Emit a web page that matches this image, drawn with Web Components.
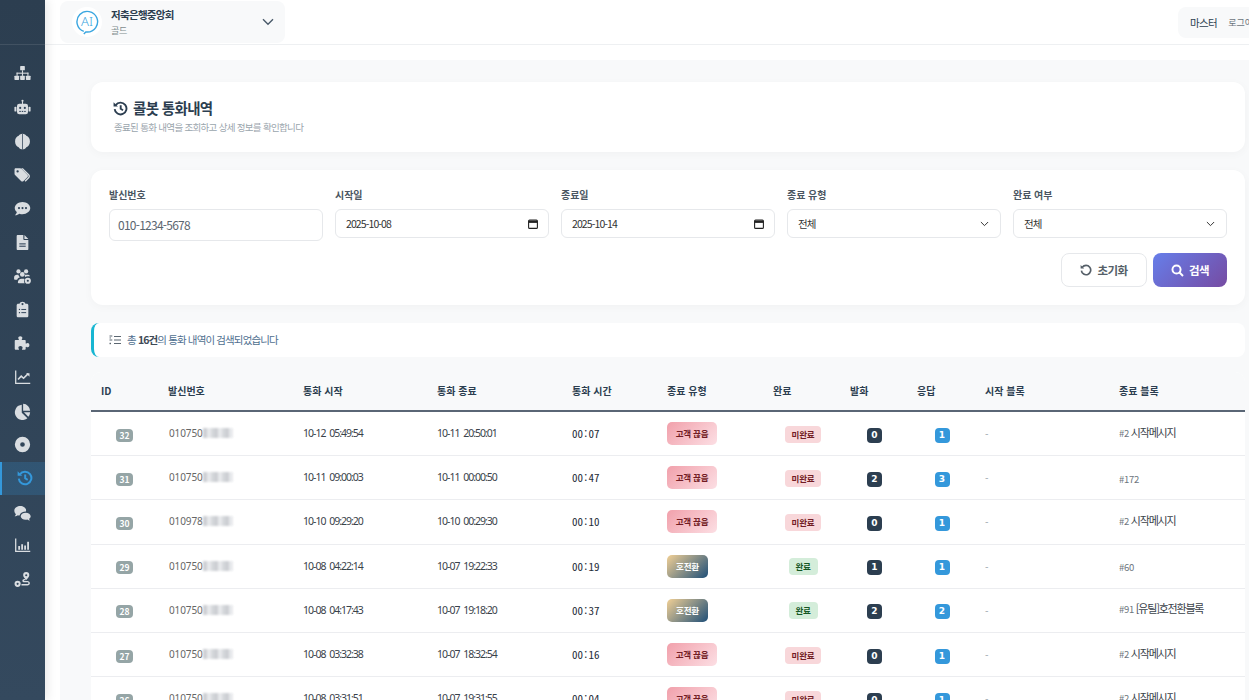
<!DOCTYPE html>
<html lang="ko">
<head>
<meta charset="utf-8">
<title>콜봇 통화내역</title>
<style>
html,body{margin:0;height:700px;overflow:hidden;background:#fff;}
body{font-family:"Noto Sans CJK KR","Noto Sans",sans-serif;color:#2c3e50;}
</style>
</head>
<body>
<app-shell>
  <side-nav slot="nav"></side-nav>
  <top-bar slot="top"></top-bar>
  <page-title></page-title>
  <filter-panel></filter-panel>
  <result-note></result-note>
  <call-table></call-table>
</app-shell>
<script>
const HISTORY = (c, w) => `<svg width="${w}" height="${w}" viewBox="0 0 16 16" fill="none" stroke="${c}" stroke-width="2"><path d="M2.900 4.400A6.300 6.300 0 1 1 1.800 8.600"/><path d="M8.200 4.600v3.700l2.500 1.500"/><path d="M.6 1.200v4.600h4.600z" fill="${c}" stroke="none"/></svg>`;

class AppShell extends HTMLElement {
    constructor() {
        super();
        this.attachShadow({ mode: "open" }).innerHTML = `
        <style>
        :host{display:grid;grid-template-columns:45px 1fr;height:700px;overflow:hidden;}
        .right{min-width:0;display:flex;flex-direction:column;height:700px;overflow:hidden;}
        .gutter{flex:1;padding:15px 0 0 15px;}
        main{background:#f8f9fa;padding:22px 4px 0 31px;height:100%;display:flex;flex-direction:column;}
        </style>
        <slot name="nav"></slot>
        <div class="right">
          <slot name="top"></slot>
          <div class="gutter"><main><slot></slot></main></div>
        </div>`;
    }
}

class SideNav extends HTMLElement {
    constructor() {
        super();
        const c = "#d9dde1", d = "#2f4257";
        const icons = [
            `<rect x="5.800" y="1" width="4.400" height="4" rx=".6"/><rect x="7.500" y="5" width="1" height="2.400"/><rect x="2.400" y="7.200" width="11.200" height="1"/><rect x="2.400" y="7.200" width="1" height="3"/><rect x="12.600" y="7.200" width="1" height="3"/><rect x="7.500" y="7.200" width="1" height="3"/><rect x=".4" y="10" width="4.400" height="4" rx=".6"/><rect x="5.800" y="10" width="4.400" height="4" rx=".6"/><rect x="11.200" y="10" width="4.400" height="4" rx=".6"/>`,
            `<circle cx="8" cy="1.700" r="1"/><rect x="7.500" y="2" width="1" height="3"/><rect x="2.800" y="4.400" width="10.400" height="10" rx="2.200"/><rect x=".4" y="7.200" width="1.900" height="4.600" rx=".8"/><rect x="13.700" y="7.200" width="1.900" height="4.600" rx=".8"/><circle cx="5.800" cy="8.400" r="1" fill="${d}"/><circle cx="10.200" cy="8.400" r="1" fill="${d}"/><rect x="5" y="11.200" width="1.400" height="1" fill="${d}"/><rect x="7.300" y="11.200" width="1.400" height="1" fill="${d}"/><rect x="9.600" y="11.200" width="1.400" height="1" fill="${d}"/>`,
            `<path d="M8 .7c2 0 3.100 1 3.600 2C13.500 3.200 15 5.200 15 8s-1.500 4.800-3.400 5.300c-.5 1-1.600 2-3.600 2s-3.100-1-3.600-2C2.500 12.800 1 10.800 1 8s1.500-4.800 3.400-5.300c.5-1 1.600-2 3.600-2z"/><rect x="7.650" y=".7" width=".7" height="14.600" fill="${d}"/>`,
            `<path fill-rule="evenodd" d="M.5 2.200v4.200c0 .5.2.9.5 1.200l5.600 5.600c.7.7 1.700.7 2.400 0l3.600-3.600c.7-.7.7-1.700 0-2.400L7 1.600C6.700 1.300 6.300 1.100 5.800 1.100H1.600C1 1.100.5 1.600.5 2.200zM3.400 3a1.100 1.100 0 1 1 0 2.200 1.100 1.100 0 0 1 0-2.200z"/><path d="M8.400 1.100l5.800 5.800c1.100 1.100 1.100 2.500 0 3.600l-3.300 3.300-.9-.9 3.300-3.300c.6-.6.6-1.300 0-1.900L6.700 1.100z"/>`,
            `<path d="M8 1.800c4 0 7.300 2.600 7.300 5.800S12 13.400 8 13.400c-1 0-2-.2-2.900-.5-1 .8-2.400 1.500-4.200 1.500.9-.9 1.600-2 1.800-3C1.500 10.400.7 9 .7 7.600.7 4.400 4 1.800 8 1.800z"/><circle cx="4.700" cy="7.600" r="1" fill="${d}"/><circle cx="8" cy="7.600" r="1" fill="${d}"/><circle cx="11.300" cy="7.600" r="1" fill="${d}"/>`,
            `<path d="M2.500 2c0-.6.4-1 1-1h5.300v3.800c0 .5.4.9.9.9h3.800V14c0 .6-.4 1-1 1h-9c-.6 0-1-.4-1-1zM9.800 1l3.700 3.700H9.800z"/><rect x="5" y="8.800" width="6" height="1" fill="${d}"/><rect x="5" y="11" width="6" height="1" fill="${d}"/>`,
            `<circle cx="4.200" cy="3.200" r="2"/><circle cx="11.400" cy="3.200" r="2"/><circle cx="7.800" cy="6" r="2.200"/><path d="M.1 9c0-1.600 1.200-2.600 2.700-2.600h1.300c.3 1.100.9 1.800 1.500 2.200C4.100 9.100 3.200 10 3 11H.9C.4 11 .1 10.700.1 10.300z"/><path d="M3.600 13.600c0-2.200 1.600-3.600 3.400-3.600h1.600c.5 0 1 .1 1.400.3-.8 1-.8 3 .1 4.100H4.400c-.5 0-.8-.3-.8-.8z"/><path d="M10 6.400h2.700c1 0 1.900.5 2.400 1.300h-2.500c-.8 0-1.600.3-2.200.8-.2-.7-.3-1.400-.4-2.100z"/><circle cx="13" cy="12" r="2.900"/><circle cx="13" cy="12" r="1" fill="${d}"/>`,
            `<path fill-rule="evenodd" d="M4 2.500h1.200C5.500 1.400 6.600.6 8 .6s2.500.8 2.800 1.900H12c.9 0 1.500.6 1.500 1.500v9.900c0 .9-.6 1.500-1.500 1.500H4c-.9 0-1.500-.6-1.500-1.500V4c0-.9.6-1.500 1.500-1.500zM7 2.900a1 1 0 1 0 2 0 1 1 0 0 0-2 0z"/><rect x="4.600" y="7.400" width="1.100" height="1.100" fill="${d}"/><rect x="6.900" y="7.500" width="4.500" height=".9" fill="${d}"/><rect x="4.600" y="10.400" width="1.100" height="1.100" fill="${d}"/><rect x="6.900" y="10.500" width="4.500" height=".9" fill="${d}"/>`,
            `<path d="M5.800 1.200c1.300 0 2.100.7 2.100 1.600 0 .6-.4 1-.6 1.400-.1.3.1.5.4.5h2.400c.5 0 .9.4.9.9v2.100c0 .3.2.5.5.4.4-.2.8-.6 1.400-.6.9 0 1.600.8 1.600 2 0 1.300-.7 2.100-1.600 2.100-.6 0-1-.4-1.400-.6-.3-.1-.5.1-.5.4v1.500c0 .5-.4.9-.9.9H7.900c-.3 0-.5-.2-.4-.5.2-.4.6-.8.6-1.400 0-.9-.8-1.600-2-1.600s-2 .7-2 1.600c0 .6.4 1 .6 1.400.1.3-.1.5-.4.5H1.600c-.5 0-.9-.4-.9-.9V5.600c0-.5.4-.9.9-.9h2.600c.3 0 .5-.2.4-.5-.2-.4-.6-.8-.6-1.400 0-.9.8-1.600 1.800-1.600z"/>`,
            `<path d="M1 1.500h1.200V13H15.300v1.200H1z"/><path d="M3.800 9.900l3-3.200 2.200 2 4.400-4.400" fill="none" stroke="${c}" stroke-width="1.500"/><path d="M11.400 4h3.200v3.200z"/>`,
            `<path d="M7.300 1.600v7.500l5.300 5.200A7.200 7.200 0 1 1 7.300 1.600z"/><path d="M8.600.8a7 7 0 0 1 6.600 6.600H8.600z"/><path d="M9.300 8.700h5.900a7 7 0 0 1-1.700 4.200z"/>`,
            `<path fill-rule="evenodd" d="M8 .8a7.200 7.200 0 1 1 0 14.400A7.200 7.200 0 0 1 8 .8zm0 5a2.200 2.200 0 1 0 0 4.400 2.200 2.200 0 0 0 0-4.400z"/>`,
            ``,
            `<path d="M5.900 1.800c3 0 5.500 1.800 5.500 4.200 0 .4-.1.800-.2 1.100-2.800 0-5.400 1.500-6 3.800-.6 0-1.200-.1-1.700-.3-.7.500-1.700 1-2.900 1 .6-.7 1.100-1.400 1.200-2.200C.8 8.600.3 7.400.3 6 .4 3.600 2.900 1.800 5.900 1.800z"/><path d="M11 8.200c2.600 0 4.700 1.500 4.700 3.300 0 1-.6 1.900-1.500 2.500.1.500.5 1 1 1.500-1.100 0-2-.3-2.700-.9-.5.100-1 .2-1.500.2-2.600 0-4.700-1.500-4.700-3.300s2.100-3.300 4.700-3.300z"/>`,
            `<path d="M1 1.500h1.200V13H15.300v1.200H1z"/><rect x="4" y="8.500" width="1.700" height="3.500"/><rect x="6.800" y="6.800" width="1.700" height="5.200"/><rect x="9.600" y="8" width="1.700" height="4"/><rect x="12.400" y="4.500" width="1.700" height="7.500"/>`,
            `<path fill-rule="evenodd" d="M11.500 1a2.900 2.900 0 0 1 2.900 2.900c0 1.400-1.800 3.500-2.900 4.500-1.100-1-2.900-3.100-2.900-4.500A2.900 2.900 0 0 1 11.500 1zm0 2a1 1 0 1 0 0 2 1 1 0 0 0 0-2z"/><path fill-rule="evenodd" d="M3.400 9.200a2.900 2.900 0 1 1 0 5.800 2.900 2.900 0 0 1 0-5.800zm0 1.900a1 1 0 1 0 0 2 1 1 0 0 0 0-2z"/><path d="M7 12.300h5.600c.7 0 1-.3 1-.8s-.3-.8-1-.8H9.900c-1.300 0-2-.7-2-1.600s.7-1.600 2-1.600h.9v1.300h-.9c-.4 0-.6.1-.6.3s.2.300.6.3h2.700c1.400 0 2.300.9 2.300 2.100s-.9 2.100-2.300 2.100H7z"/>`
        ];
        const items = icons.map((p, i) => i === 12
            ? `<a class="on">${HISTORY("#3498db", 16)}</a>`
            : `<a><svg width="17" height="17" viewBox="0 0 16 16" fill="${c}">${p}</svg></a>`).join("");
        this.attachShadow({ mode: "open" }).innerHTML = `
        <style>
        :host{display:block;height:700px;background:linear-gradient(180deg,#2c3e50,#34495e);box-shadow:2px 0 10px rgba(0,0,0,.1);position:relative;z-index:2;}
        .brand{height:44px;border-bottom:1px solid rgba(255,255,255,.1);}
        nav{padding-top:12px;display:flex;flex-direction:column;}
        a{height:33.730px;display:flex;align-items:center;justify-content:center;border-left:2px solid transparent;box-sizing:border-box;padding-right:2px;}
        a.on{background:rgba(52,152,219,.2);border-left-color:#3498db;}
        a.on svg{margin-left:5px;}
        </style>
        <div class="brand"></div>
        <nav>${items}</nav>`;
    }
}

class TopBar extends HTMLElement {
    constructor() {
        super();
        this.attachShadow({ mode: "open" }).innerHTML = `
        <style>
        :host{display:flex;height:44px;box-sizing:content-box;border-bottom:1px solid #eef0f2;padding-left:15px;background:#fff;overflow:hidden;flex:none;}
        .org{width:225px;height:42px;margin-top:1px;background:#f8f9fa;border-radius:8px;display:flex;align-items:center;padding-left:12px;box-sizing:border-box;flex:none;}
        .logo{width:30px;height:30px;border-radius:50%;background:#fff;display:flex;align-items:center;justify-content:center;flex:none;}
        .names{margin-left:9px;flex:1;display:flex;flex-direction:column;}
        .name{font-size:10.500px;font-weight:700;line-height:15px;letter-spacing:-.7px;color:#2c3e50;}
        .grade{font-size:9px;line-height:14px;margin-top:2px;color:#7f8c8d;letter-spacing:-.3px;}
        .chev{margin-right:11px;}
        .user{margin:7px 0 0 893px;height:31px;width:120px;flex:none;background:#f8f9fa;border-radius:8px;display:flex;align-items:center;padding-left:12px;box-sizing:border-box;gap:11px;}
        .role{font-size:10.500px;letter-spacing:-.6px;color:#2c3e50;}
        .out{font-size:9px;color:#6c757d;white-space:nowrap;}
        </style>
        <div class="org">
          <div class="logo">
            <svg width="24" height="26" viewBox="0 0 24 26" fill="none">
              <path d="M8.800 22.400A10.300 10.300 0 1 1 12 23h-1.200l-2 2" stroke="#3aa6e0" stroke-width="1.400"/>
              <text x="12" y="17" text-anchor="middle" font-family="Noto Sans,sans-serif" font-size="13" font-weight="300" fill="#3aa6e0">AI</text>
            </svg>
          </div>
          <div class="names"><span class="name">저축은행중앙회</span><span class="grade">골드</span></div>
          <svg class="chev" width="12" height="8" viewBox="0 0 12 8" fill="none" stroke="#4a5a6a" stroke-width="1.400"><path d="M1 1.300l5 5 5-5"/></svg>
        </div>
        <div class="user"><span class="role">마스터</span><span class="out">로그아웃</span></div>`;
    }
}

class PageTitle extends HTMLElement {
    constructor() {
        super();
        this.attachShadow({ mode: "open" }).innerHTML = `
        <style>
        :host{display:block;height:70px;box-sizing:border-box;background:#fff;border-radius:12px;box-shadow:0 2px 10px rgba(0,0,0,.03);padding:16px 22px 0;flex:none;}
        h1{margin:0;font-size:14.500px;line-height:20px;font-weight:700;color:#2c3e50;display:flex;align-items:center;gap:5px;letter-spacing:-.65px;}
        p{margin:2px 0 0 1px;font-size:9.500px;line-height:14px;color:#9aa5ad;letter-spacing:-.68px;}
        </style>
        <h1>${HISTORY("#2c3e50", 15)}콜봇 통화내역</h1>
        <p>종료된 통화 내역을 조회하고 상세 정보를 확인합니다</p>`;
    }
}

class FilterField extends HTMLElement {
    constructor() {
        super();
        const kind = this.getAttribute("kind");
        const trail = kind === "date"
            ? `<svg width="12" height="12" viewBox="0 0 12 12" fill="none" stroke="#222" stroke-width="1.100"><rect x="1.600" y="2.100" width="8.800" height="8.300" rx="1"/><path d="M1.600 3.900h8.800" stroke-width="2"/></svg>`
            : kind === "select"
            ? `<svg width="9" height="6" viewBox="0 0 10 6" fill="none" stroke="#333" stroke-width="1.100"><path d="M1 .8l4 4 4-4"/></svg>`
            : ``;
        this.attachShadow({ mode: "open" }).innerHTML = `
        <style>
        :host{display:block;min-width:0;}
        label{display:block;font-size:10px;line-height:14px;font-weight:700;color:#4a5662;margin:0 0 7px;letter-spacing:-.05px;}
        .box{height:29px;box-sizing:border-box;border:1px solid #e6e8eb;border-radius:6px;display:flex;align-items:center;justify-content:space-between;background:#fff;padding:0 10px;font-size:10.500px;color:#333;letter-spacing:-.9px;}
        :host([kind="text"]) .box{height:32px;padding:0 8px 2px;font-size:12px;color:#5b6670;letter-spacing:-.75px;}
        :host([kind="select"]) .box{padding:0 11px 0 10px;}
        :host([kind="date"]) .box{padding:0 9px 0 10px;}
        </style>
        <label>${this.getAttribute("label")}</label>
        <div class="box"><span><slot></slot></span>${trail}</div>`;
    }
}

class FilterPanel extends HTMLElement {
    constructor() {
        super();
        this.attachShadow({ mode: "open" }).innerHTML = `
        <style>
        :host{display:block;margin-top:18px;height:135px;box-sizing:border-box;background:#fff;border-radius:12px;box-shadow:0 2px 10px rgba(0,0,0,.03);padding:18px;flex:none;}
        .fields{display:grid;grid-template-columns:repeat(5,214px);gap:12px;height:65px;}
        .actions{display:flex;justify-content:flex-end;gap:6px;}
        button{height:34px;box-sizing:border-box;border-radius:8px;font:700 11.500px "Noto Sans CJK KR",sans-serif;display:flex;align-items:center;justify-content:center;gap:5px;padding:0;letter-spacing:-.5px;}
        .reset{width:86px;background:#fff;border:1px solid #e6e8eb;color:#555f68;}
        .go{width:74px;border:0;color:#fff;background:linear-gradient(135deg,#667eea,#764ba2);}
        </style>
        <div class="fields">
          <filter-field kind="text" label="발신번호">010-1234-5678</filter-field>
          <filter-field kind="date" label="시작일">2025-10-08</filter-field>
          <filter-field kind="date" label="종료일">2025-10-14</filter-field>
          <filter-field kind="select" label="종료 유형">전체</filter-field>
          <filter-field kind="select" label="완료 여부">전체</filter-field>
        </div>
        <div class="actions">
          <button class="reset"><svg width="12" height="12" viewBox="0 0 16 16" fill="none" stroke="#555f68" stroke-width="2.200"><path d="M3.100 4.400A6.200 6.200 0 1 1 1.900 8.800"/><path d="M.8 1.200v4.700h4.700z" fill="#555f68" stroke="none"/></svg>초기화</button>
          <button class="go"><svg width="13" height="13" viewBox="0 0 16 16" fill="none" stroke="#fff" stroke-width="2.400"><circle cx="6.800" cy="6.800" r="5"/><path d="M10.500 10.500l4.300 4.300"/></svg>검색</button>
        </div>`;
    }
}

class ResultNote extends HTMLElement {
    constructor() {
        super();
        this.attachShadow({ mode: "open" }).innerHTML = `
        <style>
        :host{display:flex;align-items:center;gap:6px;margin-top:18px;height:34px;box-sizing:border-box;background:#fff;border-radius:8px;border-left:3px solid #17b6d2;padding-left:15px;font-size:10.500px;color:#4f6f8f;letter-spacing:-.87px;flex:none;}
        b{font-weight:700;color:#3e4a56;}
        span{position:relative;top:-1px;}
        </style>
        <svg width="12" height="10" viewBox="0 0 12 10" fill="#5b6670"><rect x="5" y="1" width="7" height="1"/><rect x="5" y="4.500" width="7" height="1"/><rect x="5" y="8" width="7" height="1"/><rect x=".5" y=".5" width="2.800" height="1"/><rect x=".5" y="2.500" width="1.500" height=".9"/><rect x=".5" y="4.500" width="2.800" height="1"/><rect x=".5" y="7.800" width="1.500" height="1.400"/></svg>
        <span>총 <b>16건</b>의 통화 내역이 검색되었습니다</span>`;
    }
}

const CALLS = [
    [32, "010750", "10-12 05:49:54", "10-11 20:50:01", "00:07", "h", 0, 1, "#2", "시작메시지"],
    [31, "010750", "10-11 09:00:03", "10-11 00:00:50", "00:47", "h", 2, 3, "#172", ""],
    [30, "010978", "10-10 09:29:20", "10-10 00:29:30", "00:10", "h", 0, 1, "#2", "시작메시지"],
    [29, "010750", "10-08 04:22:14", "10-07 19:22:33", "00:19", "t", 1, 1, "#60", ""],
    [28, "010750", "10-08 04:17:43", "10-07 19:18:20", "00:37", "t", 2, 2, "#91", "[유틸]호전환블록"],
    [27, "010750", "10-08 03:32:38", "10-07 18:32:54", "00:16", "h", 0, 1, "#2", "시작메시지"],
    [26, "010750", "10-08 03:31:51", "10-07 19:31:55", "00:04", "h", 0, 1, "#2", "시작메시지"]
];

class CallTable extends HTMLElement {
    constructor() {
        super();
        this.attachShadow({ mode: "open" });
    }
    connectedCallback() {
        const heads = ["ID", "발신번호", "통화 시작", "통화 종료", "통화 시간", "종료 유형", "완료", "발화", "응답", "시작 블록", "종료 블록"];
        const rows = CALLS.map(r => `
          <div class="row">
            <span class="c"><i class="id">${r[0]}</i></span>
            <span class="phone">${r[1]}<i class="blur"></i></span>
            <span class="t">${r[2]}</span>
            <span class="t">${r[3]}</span>
            <span class="dur">${r[4]}</span>
            <span>${r[5] === "h" ? `<i class="end hang">고객 끊음</i>` : `<i class="end trans">호전환</i>`}</span>
            <span class="c">${r[5] === "h" ? `<i class="st no">미완료</i>` : `<i class="st yes">완료</i>`}</span>
            <span class="c"><i class="n dark">${r[6]}</i></span>
            <span class="c"><i class="n blue">${r[7]}</i></span>
            <span class="dash">-</span>
            <span class="blk${r[9] ? " named" : ""}"><small>${r[8]}</small> ${r[9]}</span>
          </div>`).join("");
        this.shadowRoot.innerHTML = `
        <style>
        :host{display:block;margin-top:15px;background:#fff;border-radius:10px 10px 0 0;flex:none;overflow:hidden;}
        .row,.head{display:grid;grid-template-columns:67px 135px 134px 135px 95px 106px 77px 67px 68px 134px 1fr;align-items:center;}
        .head{height:40px;box-sizing:border-box;background:#f8f9fa;border-bottom:2px solid #5a6675;font-size:10px;font-weight:700;color:#2c3e50;padding-bottom:2px;}
        .head span{padding-left:10px;}
        .row{height:44.200px;box-sizing:border-box;border-bottom:1px solid #ecedf0;font-size:11px;color:#333;}
        .row>span{padding-left:10px;min-width:0;white-space:nowrap;}
        .row>span.c{padding:0;text-align:center;}
        i{font-style:normal;display:inline-block;}
        .id{background:#95a5a6;color:#fff;font-size:8.500px;font-weight:700;line-height:13px;width:17px;border-radius:4px;}
        .row>.phone{font-family:"Noto Sans",sans-serif;font-size:10px;color:#666;display:flex;align-items:center;padding-left:11px;margin-bottom:1px;letter-spacing:-.1px;}
        .blur{width:30px;height:10px;filter:blur(1px);opacity:.85;background:repeating-linear-gradient(90deg,#c4c7cc 0 4px,#e4e6e9 4px 8px,#cfd2d6 8px 11px);}
        .t{font-family:"Noto Sans","Noto Sans CJK KR",sans-serif;letter-spacing:-1px;word-spacing:2px;font-size:10.500px;color:#3a424a;margin-bottom:1px;}
        .dur{font-family:"Noto Sans Mono CJK KR","Liberation Mono",monospace;font-size:11px;font-weight:500;color:#1f2d3a;margin-bottom:1px;}
        .end{font-size:8.500px;font-weight:700;line-height:23px;height:23px;border-radius:5px;text-align:center;letter-spacing:-.2px;}
        .hang{width:50px;color:#721c24;background:linear-gradient(135deg,#f1a0ab,#fcdfe4);}
        .trans{width:41px;color:#fff;background:linear-gradient(135deg,#f2d095,#1f4f78);}
        .st{font-size:8.500px;font-weight:700;line-height:17px;border-radius:4px;text-align:center;position:relative;left:1.500px;letter-spacing:-.2px;}
        .no{width:36px;background:#f8d7da;color:#721c24;}
        .yes{width:29px;background:#d4edda;color:#155724;}
        .n{width:15px;line-height:15px;border-radius:4px;color:#fff;font:700 9px/15px "DejaVu Sans",sans-serif;text-align:center;margin-left:2px;}
        .dark{background:#2c3e50;}
        .blue{background:#3498db;}
        .dash{color:#98a2ab;font-size:10px;}
        .blk{font-size:11px;color:#3a424a;letter-spacing:-1.200px;}
        .named{margin-bottom:4px;}
        small{font-size:9.500px;color:#6c757d;letter-spacing:-.3px;}
        </style>
        <div class="head">${heads.map(h => `<span>${h}</span>`).join("")}</div>
        ${rows}`;
    }
}

customElements.define("app-shell", AppShell);
customElements.define("side-nav", SideNav);
customElements.define("top-bar", TopBar);
customElements.define("page-title", PageTitle);
customElements.define("filter-field", FilterField);
customElements.define("filter-panel", FilterPanel);
customElements.define("result-note", ResultNote);
customElements.define("call-table", CallTable);
</script>
</body>
</html>
